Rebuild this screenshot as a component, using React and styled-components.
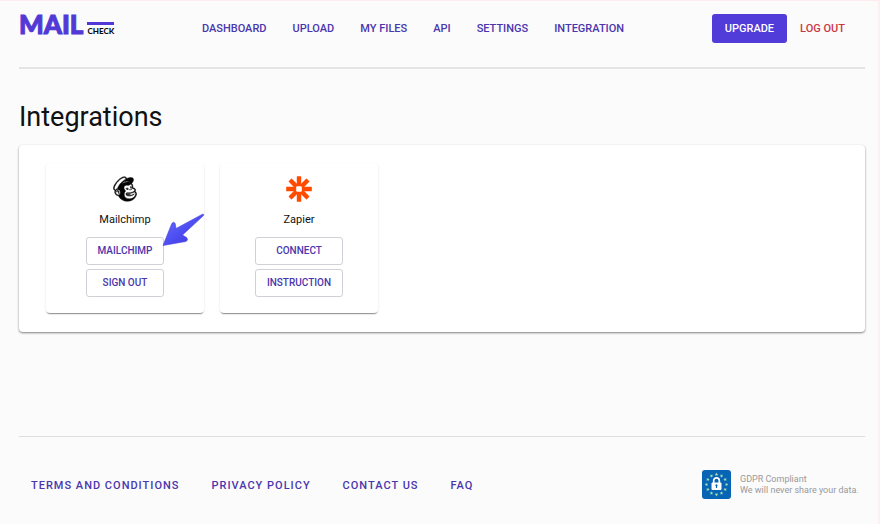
import React from "react";
import styled, { createGlobalStyle } from "styled-components";
import { FaMailchimp } from "react-icons/fa";

const GlobalStyle = createGlobalStyle`
  *, *::before, *::after { box-sizing: border-box; }
  body {
    margin: 0;
    background: #fbfbfc;
    color: #111;
    font-family: Roboto, "Liberation Sans", sans-serif;
  }
`;

const Page = styled.div`
  min-height: 100vh;
  padding: 0 13px 0 19px;
  border-top: 1px solid #fdecee;
  border-right: 2px solid #fdf0f1;
`;

const Header = styled.header`
  display: flex;
  align-items: center;
  justify-content: space-between;
  padding: 11px 0 23px;
  border-bottom: 2px solid #e4e4e4;
`;

const Logo = styled.a`
  display: flex;
  gap: 4px;
  height: 32px;
  padding-bottom: 9px;
  align-items: flex-end;
  text-decoration: none;
  font-family: Lato, "Liberation Sans", sans-serif;
  font-weight: 900;
`;

const LogoMain = styled.span`
  color: #5239d6;
  font-size: 26px;
  line-height: 22px;
  -webkit-text-stroke: 1px #5239d6;
`;

const LogoSub = styled.span`
  padding-top: 2px;
  border-top: 3px solid #5239d6;
  color: #0c0c10;
  font-size: 8px;
  line-height: 8px;
`;

const Nav = styled.nav`
  display: flex;
  gap: 26px;
  padding-top: 2px;
`;

const NavLink = styled.a`
  color: #4a36ad;
  font-size: 11px;
  font-weight: 500;
  line-height: 16px;
  text-decoration: none;
  white-space: nowrap;
`;

const Actions = styled.div`
  display: flex;
  align-items: center;
`;

const ActionButton = styled.button`
  height: 29px;
  padding: 2px ${(p) => (p.$filled ? 13 : 20)}px 0 13px;
  border: 0;
  border-radius: 3px;
  background: ${(p) => (p.$filled ? "#513bd9" : "transparent")};
  color: ${(p) => (p.$filled ? "#fff" : "#cb3644")};
  font: 500 11px/16px Roboto, sans-serif;
  white-space: nowrap;
`;

const Title = styled.h1`
  margin: 31px 0 11px;
  font-size: 27px;
  font-weight: 400;
  line-height: 34px;
`;

const Panel = styled.section`
  display: flex;
  flex-wrap: wrap;
  gap: 16px;
  padding: 18px 27px 19px;
  border-radius: 4px;
  background: #fff;
  box-shadow: 0 1px 2px rgba(0, 0, 0, 0.4), 0 1px 3px rgba(0, 0, 0, 0.12);
`;

const Card = styled.article`
  position: relative;
  display: flex;
  flex-direction: column;
  align-items: center;
  width: 158px;
  padding: 12px 0 16px;
  border-radius: 4px;
  box-shadow: 0 2px 1px -1px rgba(0, 0, 0, 0.35), 0 1px 2px rgba(0, 0, 0, 0.16);
`;

const CardIcon = styled.div`
  display: flex;
  align-items: center;
  height: 28px;
`;

const CardName = styled.h2`
  margin: 8px 0;
  font-size: 11px;
  font-weight: 400;
  line-height: 18px;
`;

const CardButtons = styled.div`
  display: grid;
  gap: 4px;
`;

const OutlineButton = styled.button`
  height: 28px;
  padding: 0 11px;
  border: 1px solid #d0d0d6;
  border-radius: 3px;
  background: #fff;
  color: #4a36ad;
  font: 500 10px/16px Roboto, sans-serif;
`;

const Pointer = styled.svg`
  position: absolute;
  top: 50px;
  left: 116px;
  width: 44px;
  height: 34px;
`;

const Footer = styled.footer`
  display: flex;
  align-items: center;
  justify-content: space-between;
  margin-top: 104px;
  padding: 33px 0 24px;
  border-top: 1px solid #dedede;
`;

const FooterNav = styled.nav`
  display: flex;
  gap: 32px;
  padding: 2px 0 0 12px;
`;

const FooterLink = styled(NavLink)`
  letter-spacing: 1px;
`;

const Compliance = styled.div`
  display: flex;
  align-items: center;
  gap: 9px;
`;

const ComplianceText = styled.p`
  min-width: 125px;
  margin: 0;
  color: #999;
  font-size: 9px;
  line-height: 11px;
`;

const spokes = [0, 45, 90, 135, 180, 225, 270, 315];

function ZapierIcon() {
  return (
    <svg width="26" height="26" viewBox="-13 -13 26 26" aria-hidden="true">
      {spokes.map((angle) => (
        <rect key={angle} x="-2.2" y="-12.8" width="4.4" height="9.2" rx="0.5" fill="#ff4a00" transform={`rotate(${angle})`} />
      ))}
      <rect x="-4.5" y="-4.5" width="9" height="9" fill="#ff4a00" />
      <rect x="-2.8" y="-2.8" width="5.6" height="5.6" rx="1" fill="#fff" />
    </svg>
  );
}

function PrivacyIcon() {
  return (
    <svg width="29" height="29" viewBox="0 0 29 29" aria-hidden="true">
      <rect width="29" height="29" rx="3" fill="#0864b4" />
      {Array.from({ length: 12 }, (_, i) => (
        <path
          key={i}
          d="M14.5 2.6 15 3.8l1.3.1-1 .8.3 1.3-1.1-.7-1.1.7.3-1.3-1-.8 1.3-.1z"
          fill="#a5e2b4"
          transform={`rotate(${i * 30} 14.5 14.5)`}
        />
      ))}
      <path d="M11.7 13v-2.4a2.8 2.8 0 0 1 5.6 0V13" fill="none" stroke="#fff" strokeWidth="1.7" />
      <rect x="9.5" y="12.5" width="10" height="7.5" rx="1" fill="#fff" />
      <path d="M14.5 14.3a1.1 1.1 0 0 1 .6 2v1.6h-1.2v-1.6a1.1 1.1 0 0 1 .6-2z" fill="#0864b4" />
    </svg>
  );
}

function PointerArrow() {
  return (
    <Pointer viewBox="0 0 44 34" aria-hidden="true">
      <defs>
        <linearGradient id="pointer-fill" x1="0" y1="0" x2="1" y2="1">
          <stop offset="0" stopColor="#6670ff" />
          <stop offset="0.6" stopColor="#4a48ee" />
          <stop offset="1" stopColor="#3931c9" />
        </linearGradient>
      </defs>
      <path
        d="M1 32.5 9.8 10.5Q11.5 8 13.2 10.5L14 15.5 40.5 1.2Q42.5 .8 41.5 2.6L20.5 22 24.6 24.6Q26.8 27.5 23.8 28.5Z"
        fill="url(#pointer-fill)"
        stroke="#4843df"
        strokeWidth="0.6"
        strokeLinejoin="round"
      />
    </Pointer>
  );
}

const navItems = ["DASHBOARD", "UPLOAD", "MY FILES", "API", "SETTINGS", "INTEGRATION"];
const footerItems = ["TERMS AND CONDITIONS", "PRIVACY POLICY", "CONTACT US", "FAQ"];

function IntegrationCard({ icon, name, actions, children }) {
  return (
    <Card>
      <CardIcon>{icon}</CardIcon>
      <CardName>{name}</CardName>
      <CardButtons>
        {actions.map((action) => (
          <OutlineButton key={action} type="button">{action}</OutlineButton>
        ))}
      </CardButtons>
      {children}
    </Card>
  );
}

export default function App() {
  return (
    <>
      <GlobalStyle />
      <Page>
        <Header>
          <Logo href="#">
            <LogoMain>MAIL</LogoMain>
            <LogoSub>CHECK</LogoSub>
          </Logo>
          <Nav aria-label="Main">
            {navItems.map((item) => (
              <NavLink key={item} href="#">{item}</NavLink>
            ))}
          </Nav>
          <Actions>
            <ActionButton type="button" $filled>UPGRADE</ActionButton>
            <ActionButton type="button">LOG OUT</ActionButton>
          </Actions>
        </Header>
        <main>
          <Title>Integrations</Title>
          <Panel>
            <IntegrationCard
              icon={
                <FaMailchimp size={28} color="#050505" stroke="#050505" strokeWidth={9} aria-hidden="true" />
              }
              name="Mailchimp"
              actions={["MAILCHIMP", "SIGN OUT"]}
            >
              <PointerArrow />
            </IntegrationCard>
            <IntegrationCard icon={<ZapierIcon />} name="Zapier" actions={["CONNECT", "INSTRUCTION"]} />
          </Panel>
        </main>
        <Footer>
          <FooterNav aria-label="Footer">
            {footerItems.map((item) => (
              <FooterLink key={item} href="#">{item}</FooterLink>
            ))}
          </FooterNav>
          <Compliance>
            <PrivacyIcon />
            <ComplianceText>
              GDPR Compliant
              <br />
              We will never share your data.
            </ComplianceText>
          </Compliance>
        </Footer>
      </Page>
    </>
  );
}
